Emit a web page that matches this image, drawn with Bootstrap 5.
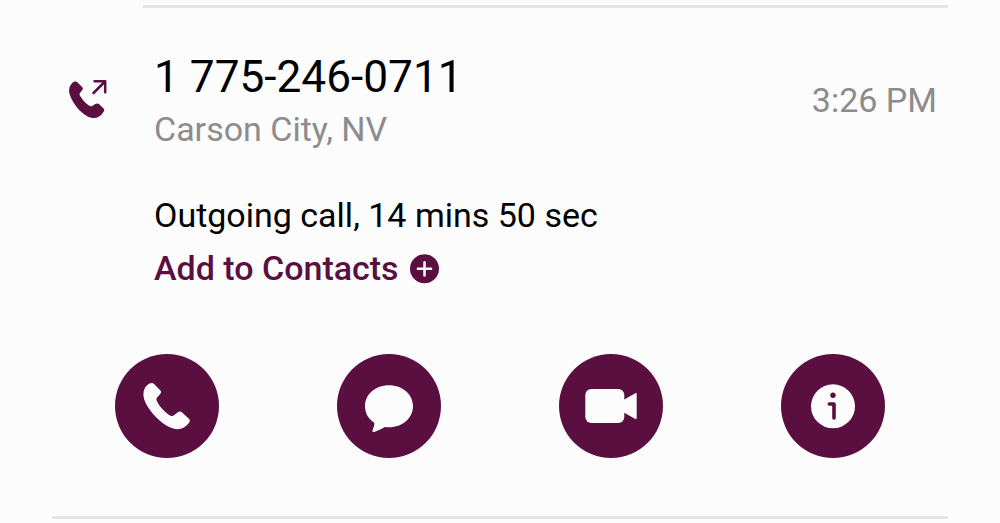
<!DOCTYPE html>
<html lang="en">
<head>
  <meta charset="UTF-8">
  <title>Recent calls</title>
  <meta name="viewport" content="width=device-width, initial-scale=1">

  <link href="https://cdn.jsdelivr.net/npm/bootstrap@5.3.3/dist/css/bootstrap.min.css" rel="stylesheet">

  <style>
    body {
      background-color: #fcfcfc;
      font-family: Roboto, "Liberation Sans", sans-serif;
      color: #000;
      overflow: hidden;
    }
    .call-log {
      height: 523px;
      padding: 5px 52px 0;
    }
    .divider {
      height: 3px;
      background-color: #e4e4e4;
    }
    .divider-top {
      margin-left: 91px;
    }
    .call-entry {
      height: 280px;
      padding-top: 43px;
    }
    .call-type {
      width: 102px;
      padding: 25px 0 0 14px;
    }
    .call-number {
      font-size: 44.2px;
      line-height: 52px;
    }
    .call-text {
      font-size: 34px;
      line-height: 40px;
      white-space: nowrap;
    }
    .call-place {
      margin-top: 6px;
    }
    .call-detail {
      margin-top: 46px;
    }
    .call-muted {
      color: #8c8c8c;
    }
    .call-time {
      padding: 29px 11px 0 0;
    }
    .add-contact {
      margin-top: 13px;
      color: #5a0f40;
      font-weight: 500;
    }
    .call-actions {
      margin: 66px 4px 0;
      height: 162px;
    }
    .action-btn {
      width: 104px;
      height: 104px;
      background-color: #5a0f40;
    }
    svg {
      display: block;
    }
  </style>
</head>

<body>

  <div class="call-log d-flex flex-column">
    <div class="divider divider-top flex-shrink-0"></div>

    <div class="call-entry d-flex flex-shrink-0">
      <div class="call-type flex-shrink-0">
        <!-- Outgoing call -->
        <svg width="44" height="44" viewBox="0 0 44 44">
          <path fill="#5a0f40" transform="translate(-.3 .2) scale(1.030)" d="M8 5.500C9.600 4.700 10.700 5.200 11.500 6L15.900 10.400C17 11.500 16.800 12.600 16 13.600L13.800 16.200C13 17.400 13.600 18.500 14.500 20C16.600 23.500 19.500 26.500 22.500 28.500C23.800 29.400 24.800 29.600 26 28.700L28.800 26.900C30 26.200 31.200 26.200 32.300 27.100L36.500 31C37.800 32.200 37.800 33.400 36.600 34.700C33 40.800 27 42.300 20.500 38.600C13.800 34.900 6.900 26.500 4 18C2.400 13.300 3.700 8 8 5.500Z"/>
          <path fill="none" stroke="#5a0f40" stroke-width="2.500" stroke-linecap="round" stroke-linejoin="round" d="M27.500 17L39 5.500M28.500 5.300H39.200V16.200"/>
        </svg>
      </div>

      <div class="flex-grow-1">
        <div class="call-number">1 775-246-0711</div>
        <div class="call-text call-place call-muted">Carson City, NV</div>
        <div class="call-text call-detail">Outgoing call, 14 mins 50 sec</div>
        <a href="#" class="call-text add-contact d-inline-flex align-items-center text-decoration-none">
          <span>Add to Contacts</span>
          <svg class="ms-2" width="36" height="36" viewBox="0 0 36 36">
            <circle cx="17.500" cy="18.800" r="14.500" fill="#5a0f40"/>
            <path stroke="#fcfcfc" stroke-width="2.500" stroke-linecap="round" d="M10.900 18.800H24.100M17.500 12.200V25.400"/>
          </svg>
        </a>
      </div>

      <div class="call-text call-time call-muted">3:26 PM</div>
    </div>

    <div class="call-actions row g-0 flex-shrink-0">
      <div class="col-3 d-flex justify-content-center">
        <a href="#" class="action-btn rounded-circle" aria-label="Call">
          <svg width="104" height="104" viewBox="0 0 104 104">
            <path fill="#fcfcfc" d="M34.500 29.600C36.500 28.600 38 28.900 39.300 30.200L45.200 36.200C46.500 37.500 46.300 38.700 45.200 40L42.100 43.500C41.100 44.900 41.300 46 42.200 47.700C45 53 49.500 57.900 54.500 61.300C56 62.300 57.200 62.400 58.600 61.400L62.500 58.500C64.200 57.300 65.600 57.300 67.100 58.500L73.700 64.500C75.200 66 75.300 67.400 73.900 69.100C69.800 74.600 63.200 77 55.500 73.600C45.500 69.200 35 58.500 30.200 48C27 40.900 28 33.100 34.500 29.600Z"/>
          </svg>
        </a>
      </div>
      <div class="col-3 d-flex justify-content-center">
        <a href="#" class="action-btn rounded-circle" aria-label="Message">
          <svg width="104" height="104" viewBox="0 0 104 104">
            <path fill="#fcfcfc" d="M52 31.300C65.500 31.300 76 40.300 76 52.200C76 64 65.500 73.200 52 73.200C50.500 73.200 49.300 73.100 48 72.900C44.500 74.600 41 76.500 37.200 78C36 78.400 35.300 77.700 35.500 76.500C36.300 74 37.600 71.500 37.300 68.800C31.500 65 28 59 28 52.200C28 40.300 38.500 31.300 52 31.300Z"/>
          </svg>
        </a>
      </div>
      <div class="col-3 d-flex justify-content-center">
        <a href="#" class="action-btn rounded-circle" aria-label="Video call">
          <svg width="104" height="104" viewBox="0 0 104 104">
            <rect x="26.300" y="35" width="39" height="34" rx="6" fill="#fcfcfc"/>
            <path fill="#fcfcfc" d="M64 46.300L76.300 39.200Q77.700 38.500 77.700 40.200V64Q77.700 65.600 76.300 64.900L64 58Z"/>
          </svg>
        </a>
      </div>
      <div class="col-3 d-flex justify-content-center">
        <a href="#" class="action-btn rounded-circle" aria-label="Details">
          <svg width="104" height="104" viewBox="0 0 104 104">
            <circle cx="52" cy="52.300" r="22" fill="#fcfcfc"/>
            <circle cx="52" cy="41.200" r="2.700" fill="#5a0f40"/>
            <path fill="none" stroke="#5a0f40" stroke-width="3.600" stroke-linecap="round" stroke-linejoin="round" d="M48.300 50H53V64"/>
          </svg>
        </a>
      </div>
    </div>

    <div class="divider flex-shrink-0"></div>
  </div>

  <script src="https://cdn.jsdelivr.net/npm/bootstrap@5.3.3/dist/js/bootstrap.bundle.min.js"></script>

</body>
</html>
